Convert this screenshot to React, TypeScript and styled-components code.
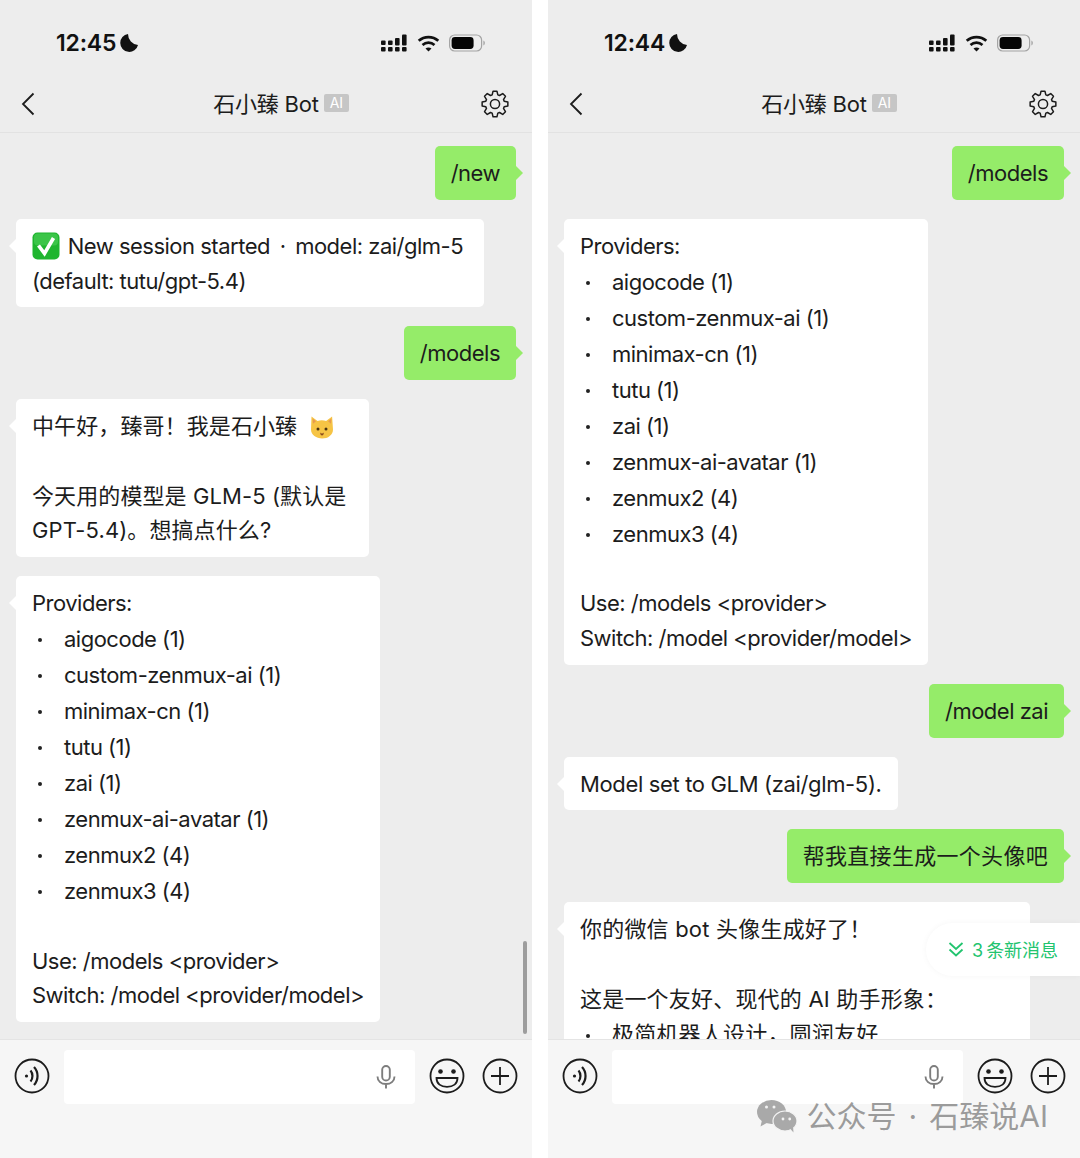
import React from 'react';
import styled, {createGlobalStyle} from 'styled-components';

const GlobalStyle = createGlobalStyle`
    html, body {
        margin: 0;
        padding: 0;
        background: #fff;
    }
    * {
        box-sizing: border-box;
    }
`;

const Screen = styled.div`
    position: relative;
    display: flex;
    justify-content: space-between;
    width: 1080px;
    height: 1158px;
    overflow: hidden;
    font-family: Inter, "Noto Sans CJK SC", sans-serif;
    color: #1c1c1c;
`;

const PhoneWrapper = styled.section`
    position: relative;
    display: flex;
    flex-direction: column;
    width: 532px;
    height: 100%;
    background: #ededed;
`;

const StatusBar = styled.div`
    flex: 0 0 75px;
    display: flex;
    justify-content: space-between;
    align-items: center;
    padding: 11px 47px 0 56px;
`;

const Clock = styled.div`
    display: flex;
    align-items: center;
    gap: 4px;
    font-size: 23px;
    font-weight: 600;
    letter-spacing: -0.2px;
    color: #111;
`;

const StatusIcons = styled.div`
    display: flex;
    align-items: center;
    gap: 9.5px;
`;

const NavBar = styled.header`
    flex: 0 0 58px;
    display: flex;
    justify-content: space-between;
    align-items: center;
    padding: 0 23px 0 21px;
    border-bottom: 1px solid #e2e2e2;
`;

const NavTitle = styled.h1`
    display: flex;
    align-items: center;
    gap: 5px;
    margin: -3px 0 0 46px;
    font-size: 22px;
    font-weight: 400;
    letter-spacing: -0.2px;
`;

const AiBadge = styled.span`
    width: 25px;
    height: 18px;
    margin-top: 2px;
    border-radius: 2px;
    background: #c6c6c6;
    color: #fff;
    font-size: 14px;
    line-height: 18px;
    text-align: center;
`;

const ChatArea = styled.div`
    flex: 1 1 0;
    min-height: 0;
    display: flex;
    flex-direction: column;
    align-items: flex-start;
    gap: 19px;
    overflow: hidden;
    padding: 13px 16px 0;
`;

const Bubble = styled.div<{$mine?: boolean; $width?: number; $spacing?: number}>`
    position: relative;
    flex: none;
    align-self: ${props => (props.$mine ? 'flex-end' : 'flex-start')};
    width: ${props => (props.$width ? `${props.$width}px` : 'auto')};
    padding: 10px 16px 9px;
    border-radius: 5px;
    background: ${props => (props.$mine ? '#95ec69' : '#fff')};
    font-size: 22px;
    letter-spacing: ${props => props.$spacing ?? -0.5}px;
    line-height: 34.75px;
    white-space: nowrap;

    &::after {
        content: '';
        position: absolute;
        top: 20px;
        ${props => (props.$mine ? 'left: 100%;' : 'right: 100%;')}
        border-style: solid;
        border-width: 7px 7px 7px 0;
        border-color: transparent #fff transparent transparent;
        ${props => props.$mine && 'border-width: 7px 0 7px 7px; border-color: transparent transparent transparent #95ec69;'}
    }
`;

const BlankLine = styled.div`
    height: 34.75px;
`;

const BulletList = styled.ul`
    margin: 0;
    padding: 0;
    list-style: none;
`;

const BulletItem = styled.li`
    display: flex;
    align-items: center;
    height: 36px;
    padding-top: 1px;

    &::before {
        content: '';
        flex: none;
        width: 4px;
        height: 4px;
        margin: 2px 22px 0 6px;
        border-radius: 50%;
        background: #222;
    }
`;

const Dot = styled.span<{$gap: number}>`
    margin: 0 ${props => props.$gap}px;
`;

const CheckGlyph = styled.svg`
    display: inline-block;
    margin-right: 2px;
    vertical-align: -6px;
`;

const CatGlyph = styled.svg`
    display: inline-block;
    margin-left: 6px;
    vertical-align: -6px;
`;

const InputBar = styled.footer`
    position: relative;
    flex: 0 0 119px;
    display: flex;
    align-items: flex-start;
    padding: 10px 14px 0 14px;
    border-top: 1px solid #e4e4e4;
    background: #f6f6f6;
`;

const ToolIcon = styled.svg`
    flex: none;
    margin-top: 8px;
`;

const InputBox = styled.div`
    flex: 0 0 351px;
    display: flex;
    justify-content: flex-end;
    align-items: center;
    height: 54px;
    margin: 0 14px 0 14px;
    padding-right: 19px;
    border-radius: 4px;
    background: #fff;
`;

const ToolGap = styled.span`
    flex: 0 0 17px;
`;

const ScrollThumb = styled.div`
    position: absolute;
    top: 941px;
    right: 5px;
    width: 4px;
    height: 93px;
    border-radius: 2px;
    background: #9d9d9d;
`;

const NewMessagePill = styled.div`
    position: absolute;
    top: 923px;
    right: 0;
    display: flex;
    align-items: center;
    gap: 8px;
    width: 154px;
    height: 53px;
    padding: 0 0 2px 22px;
    border-radius: 27px 0 0 27px;
    background: #fff;
    box-shadow: 0 0 6px rgba(0, 0, 0, 0.04);
    color: #22c46f;
    font-size: 18px;
    white-space: nowrap;
`;

const PillCount = styled.span`
    margin-right: 3px;
`;

const Watermark = styled.div`
    position: absolute;
    top: 1097px;
    right: 32px;
    display: flex;
    align-items: center;
    gap: 10px;
    color: rgba(120, 120, 120, 0.72);
    font-size: 30px;
    line-height: 38px;
    white-space: nowrap;
`;

function Moon() {
    return (
        <svg width="19" height="20" viewBox="0 0 19 20">
            <path d="M8 1a9 9 0 1 0 10 11A11 11 0 0 1 8 1z" fill="#111" />
        </svg>
    );
}

function SignalIcon() {
    return (
        <svg width="26" height="18" viewBox="0 0 26 18" fill="#111">
            <rect x="0" y="6.500" width="4.600" height="4.400" rx="1" />
            <rect x="0" y="13" width="4.600" height="4.400" rx="1" />
            <rect x="7" y="6.500" width="4.600" height="4.400" rx="1" />
            <rect x="7" y="13" width="4.600" height="4.400" rx="1" />
            <rect x="14" y="4" width="4.600" height="7.400" rx="1" />
            <rect x="14" y="13" width="4.600" height="4.400" rx="1" />
            <rect x="21" y="0.500" width="4.600" height="11" rx="1" />
            <rect x="21" y="13" width="4.600" height="4.400" rx="1" />
        </svg>
    );
}

function WifiIcon() {
    return (
        <svg width="23" height="17" viewBox="0 0 22 17" fill="none" stroke="#111" strokeWidth="2.700">
            <path d="M1.200 5.800c5.600-5 14-5 19.600 0" />
            <path d="M5 9.900c3.500-3 8.500-3 12 0" />
            <path d="M11 16.600l-3-3.100c1.800-1.400 4.200-1.400 6 0z" fill="#111" stroke="none" />
        </svg>
    );
}

function BatteryIcon() {
    return (
        <svg width="36" height="18" viewBox="0 0 36 18">
            <rect x="0.600" y="1" width="32" height="16" rx="5" fill="none" stroke="#a4a4a4" strokeWidth="1.200" />
            <rect x="2.600" y="3" width="22" height="12" rx="3.400" fill="#050505" />
            <path d="M34.400 6.600c1 .4 1.400 1.300 1.400 2.400s-.4 2-1.400 2.400z" fill="#a4a4a4" />
        </svg>
    );
}

function BackIcon() {
    return (
        <svg width="14" height="24" viewBox="0 0 14 24" fill="none" stroke="#1c1c1c" strokeWidth="1.800">
            <path d="M12.500 1.500L2 12l10.500 10.500" />
        </svg>
    );
}

// eight rounded teeth round a ring, worked out once instead of a long hand-typed path
function gearPath() {
    const center = 14;
    const points: string[] = [];
    for (let i = 0; i < 8; i++) {
        const angle = (i * Math.PI) / 4 - Math.PI / 2;
        [[-0.3, 9.6], [-0.15, 13], [0.15, 13], [0.3, 9.6]].forEach(([offset, radius]) => {
            const x = center + radius * Math.cos(angle + offset);
            const y = center + radius * Math.sin(angle + offset);
            points.push(`${x.toFixed(2)} ${y.toFixed(2)}`);
        });
    }
    return `M${points.join('L')}Z`;
}

function GearIcon() {
    return (
        <svg width="28" height="28" viewBox="0 0 28 28" fill="none" stroke="#1c1c1c" strokeWidth="1.500" strokeLinejoin="round">
            <path d={gearPath()} />
            <circle cx="14" cy="14" r="4.600" />
        </svg>
    );
}

function CheckEmoji() {
    return (
        <CheckGlyph width="28" height="28" viewBox="0 0 28 28">
            <rect x="0.500" y="0.500" width="27" height="27" rx="5" fill="#1fb52f" />
            <rect x="2" y="1.500" width="24" height="12" rx="4" fill="#4fd15a" opacity="0.600" />
            <path d="M6.500 13.500l6 8L21.500 6" fill="none" stroke="#fff" strokeWidth="3.600" />
        </CheckGlyph>
    );
}

function CatEmoji() {
    return (
        <CatGlyph width="24" height="25" viewBox="0 0 24 25">
            <path d="M1.500 1.500l6 4.500c2.600-.9 6-.9 8.600 0l6-4.500.9 13c0 5.600-5 9-10.800 9S1 20 1 14.500z" fill="#f6c445" />
            <path d="M2.600 3.400l3.400 2.800-3 2.600zM21.400 3.400l-3.400 2.800 3 2.600z" fill="#e89a4e" />
            <circle cx="8" cy="14" r="1.500" fill="#4a3410" />
            <circle cx="16" cy="14" r="1.500" fill="#4a3410" />
            <path d="M10 17.500q2 1.800 4 0q-.4 3-2 3t-2-3z" fill="#8a4a1c" />
        </CatGlyph>
    );
}

function VoiceButton() {
    return (
        <ToolIcon width="36" height="36" viewBox="0 0 36 36" fill="none" stroke="#1c1c1c" strokeWidth="1.800">
            <circle cx="18" cy="18" r="16.500" />
            <circle cx="12.500" cy="18" r="1.600" fill="#1c1c1c" stroke="none" />
            <path d="M16.500 12.500c2.600 3 2.600 8 0 11" strokeWidth="2.200" />
            <path d="M20 9c4.700 5 4.700 13 0 18" strokeWidth="2.200" />
        </ToolIcon>
    );
}

function MicIcon() {
    return (
        <svg width="20" height="24" viewBox="0 0 20 24" fill="none" stroke="#7d7d7d" strokeWidth="1.900">
            <rect x="6.200" y="1" width="7.600" height="14.500" rx="3.800" />
            <path d="M1.500 11.500c0 4.800 3.800 7.500 8.500 7.500s8.500-2.700 8.500-7.500M10 19v4.500" />
        </svg>
    );
}

function SmileButton() {
    return (
        <ToolIcon width="36" height="36" viewBox="0 0 36 36" fill="none" stroke="#1c1c1c" strokeWidth="1.800">
            <circle cx="18" cy="18" r="16.500" />
            <circle cx="11.500" cy="13.500" r="2.300" fill="#1c1c1c" stroke="none" />
            <circle cx="24.500" cy="13.500" r="2.300" fill="#1c1c1c" stroke="none" />
            <path d="M7.500 20h21c0 6-4.500 8.800-10.500 8.800S7.500 26 7.500 20z" />
        </ToolIcon>
    );
}

function PlusButton() {
    return (
        <ToolIcon width="36" height="36" viewBox="0 0 36 36" fill="none" stroke="#1c1c1c" strokeWidth="1.800">
            <circle cx="18" cy="18" r="16.500" />
            <path d="M18 9v18M9 18h18" />
        </ToolIcon>
    );
}

function DoubleChevron() {
    return (
        <svg width="16" height="16" viewBox="0 0 16 16" fill="none" stroke="#22c46f" strokeWidth="1.800">
            <path d="M1.500 2l6.500 6 6.500-6M1.500 8.500l6.500 6 6.500-6" />
        </svg>
    );
}

function WechatLogo() {
    return (
        <svg width="41" height="34" viewBox="0 0 41 34">
            <ellipse cx="15.500" cy="13" rx="14.500" ry="12" fill="#a9a9a9" />
            <path d="M6 21l-1.500 6.500 7-4z" fill="#a9a9a9" />
            <ellipse cx="29" cy="22" rx="12" ry="10" fill="#a9a9a9" stroke="#f3f3f3" strokeWidth="1.200" />
            <path d="M34 29.500l3.500 4-.5-6z" fill="#a9a9a9" />
            <circle cx="10.500" cy="8" r="1.500" fill="#f3f3f3" />
            <circle cx="18" cy="8" r="1.500" fill="#f3f3f3" />
            <circle cx="27" cy="20" r="1.400" fill="#f3f3f3" />
            <circle cx="33.700" cy="20" r="1.400" fill="#f3f3f3" />
        </svg>
    );
}

const PROVIDERS = [
    'aigocode (1)',
    'custom-zenmux-ai (1)',
    'minimax-cn (1)',
    'tutu (1)',
    'zai (1)',
    'zenmux-ai-avatar (1)',
    'zenmux2 (4)',
    'zenmux3 (4)'
];

function ProvidersBubble() {
    return (
        <Bubble>
            <div>Providers:</div>
            <BulletList>
                {PROVIDERS.map(item => <BulletItem key={item}>{item}</BulletItem>)}
            </BulletList>
            <BlankLine />
            <div>Use: /models &lt;provider&gt;</div>
            <div>Switch: /model &lt;provider/model&gt;</div>
        </Bubble>
    );
}

type PhoneProps = {time: string; children: React.ReactNode; overlay?: React.ReactNode};

function Phone(props: PhoneProps) {
    const {time, children, overlay} = props;
    return (
        <PhoneWrapper>
            <StatusBar>
                <Clock>{time}<Moon /></Clock>
                <StatusIcons>
                    <SignalIcon />
                    <WifiIcon />
                    <BatteryIcon />
                </StatusIcons>
            </StatusBar>
            <NavBar>
                <BackIcon />
                <NavTitle>石小臻 Bot <AiBadge>AI</AiBadge></NavTitle>
                <GearIcon />
            </NavBar>
            <ChatArea>{children}</ChatArea>
            <InputBar>
                <VoiceButton />
                <InputBox><MicIcon /></InputBox>
                <SmileButton />
                <ToolGap />
                <PlusButton />
            </InputBar>
            {overlay}
        </PhoneWrapper>
    );
}

export default function App() {
    return (
        <Screen>
            <GlobalStyle />
            <Phone time="12:45" overlay={<ScrollThumb />}>
                <Bubble $mine>/new</Bubble>
                <Bubble $width={468}>
                    <div><CheckEmoji /> New session started <Dot $gap={4}>·</Dot> model: zai/glm-5</div>
                    <div>(default: tutu/gpt-5.4)</div>
                </Bubble>
                <Bubble $mine>/models</Bubble>
                <Bubble $width={353} $spacing={0.1}>
                    <div>中午好，臻哥！我是石小臻 <CatEmoji /></div>
                    <BlankLine />
                    <div>今天用的模型是 GLM-5 (默认是</div>
                    <div>GPT-5.4)。想搞点什么?</div>
                </Bubble>
                <ProvidersBubble />
            </Phone>
            <Phone
                time="12:44"
                overlay={(
                    <NewMessagePill>
                        <DoubleChevron />
                        <span><PillCount>3</PillCount>条新消息</span>
                    </NewMessagePill>
                )}
            >
                <Bubble $mine>/models</Bubble>
                <ProvidersBubble />
                <Bubble $mine>/model zai</Bubble>
                <Bubble $spacing={-0.35}>Model set to GLM (zai/glm-5).</Bubble>
                <Bubble $mine $spacing={0.3}>帮我直接生成一个头像吧</Bubble>
                <Bubble $width={466} $spacing={0.2}>
                    <div>你的微信 bot 头像生成好了！</div>
                    <BlankLine />
                    <div>这是一个友好、现代的 AI 助手形象：</div>
                    <BulletList>
                        <BulletItem>极简机器人设计，圆润友好</BulletItem>
                    </BulletList>
                </Bubble>
            </Phone>
            <Watermark>
                <WechatLogo />
                <span>公众号<Dot $gap={12}>·</Dot>石臻说AI</span>
            </Watermark>
        </Screen>
    );
}
